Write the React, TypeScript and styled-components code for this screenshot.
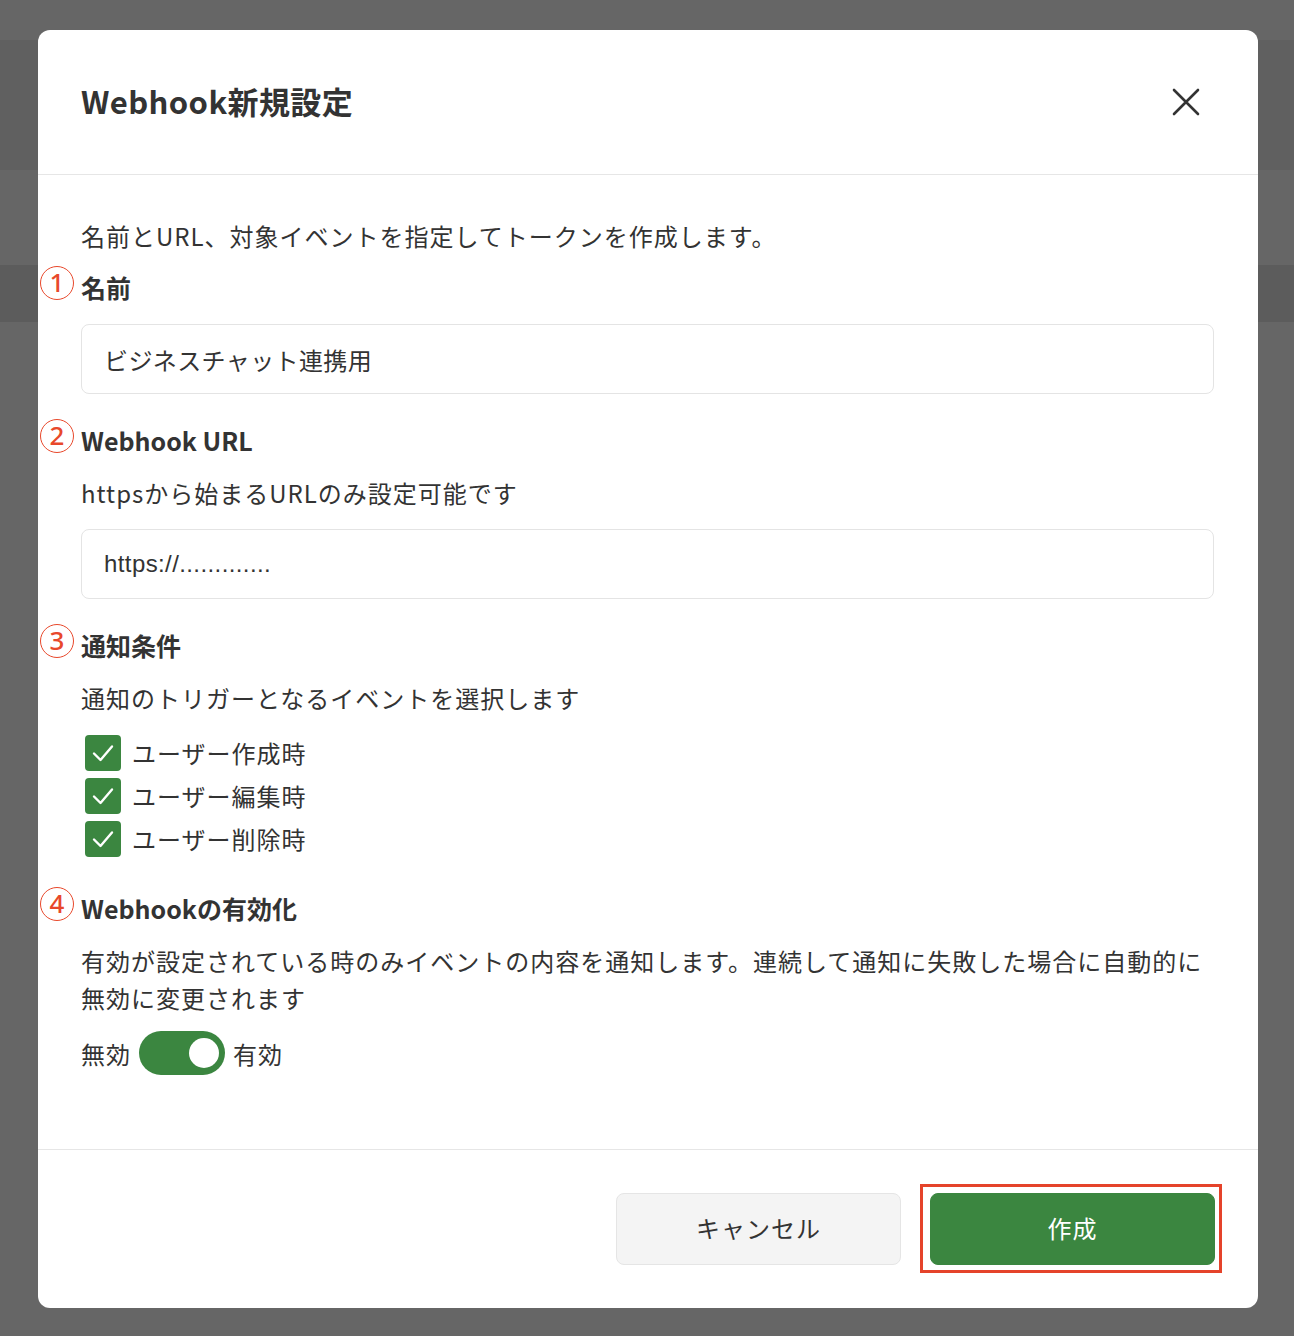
import React from "react";
import styled, { createGlobalStyle } from "styled-components";

const GlobalStyle = createGlobalStyle`
  html, body {
    margin: 0;
    padding: 0;
  }
  body {
    font-family: "Noto Sans CJK JP", "Noto Sans", sans-serif;
    color: #333;
  }
  * {
    box-sizing: border-box;
  }
`;

const Page = styled.div`
  position: relative;
  width: 100%;
  height: 1336px;
  overflow: hidden;
  background: #fff;
  display: flex;
  flex-direction: column;
`;

const Band = styled.div<{ $h: number; $bg: string }>`
  height: ${(p) => p.$h}px;
  background: ${(p) => p.$bg};
  flex-shrink: 0;
`;

const Overlay = styled.div`
  position: absolute;
  inset: 0;
  background: rgba(0, 0, 0, 0.6);
  display: flex;
  padding: 30px 36px 28px 38px;
`;

const Modal = styled.div`
  flex: 1;
  background: #fff;
  border-radius: 12px;
  display: flex;
  flex-direction: column;
`;

const Header = styled.header`
  height: 145px;
  flex-shrink: 0;
  display: flex;
  align-items: center;
  justify-content: space-between;
  padding: 0 56px 0 43px;
  border-bottom: 1px solid #e6e6e6;
`;

const Title = styled.h1`
  margin: -4px 0 0;
  font-size: 31px;
  font-weight: 700;
  color: #333;
  letter-spacing: 0.4px;
`;

const CloseButton = styled.button`
  border: 0;
  background: none;
  padding: 0;
  width: 32px;
  height: 32px;
  display: flex;
  align-items: center;
  justify-content: center;
  cursor: pointer;
`;

const Body = styled.div`
  flex: 1;
  padding: 42px 44px 0 43px;
  display: flex;
  flex-direction: column;
  letter-spacing: 1px;
`;

const Lead = styled.p`
  margin: 0 0 13px;
  font-size: 24px;
  line-height: 38px;
`;

const Sections = styled.div`
  display: flex;
  flex-direction: column;
  gap: 29px;
`;

const Section = styled.section`
  display: flex;
  flex-direction: column;
  gap: 15px;
`;

const Label = styled.h2`
  position: relative;
  margin: 0;
  font-size: 25px;
  line-height: 38px;
  font-weight: 700;
  color: #333;
  letter-spacing: 0;
`;

const StepMark = styled.span`
  position: absolute;
  left: -41px;
  top: -2px;
  width: 34px;
  height: 34px;
  border: 1.6px solid #e8482b;
  border-radius: 50%;
  color: #e8482b;
  font-size: 26px;
  font-weight: 500;
  line-height: 30px;
  text-align: center;
  font-family: "Noto Sans", sans-serif;
`;

const Help = styled.p`
  margin: 0;
  font-size: 24px;
  line-height: 37px;
  color: #333;
`;

const TextInput = styled.input`
  height: 70px;
  width: 100%;
  margin: 3px 0 -2px;
  border: 1px solid #e4e4e4;
  border-radius: 8px;
  padding: 0 22px;
  font-family: "Liberation Sans", "Noto Sans CJK JP", sans-serif;
  font-size: 24px;
  letter-spacing: 0.4px;
  color: #333;
  outline: none;
  &::placeholder {
    color: #333;
  }
`;

const CheckList = styled.div`
  display: flex;
  flex-direction: column;
`;

const CheckRow = styled.label`
  height: 43px;
  display: flex;
  align-items: center;
  gap: 11px;
  padding-left: 4px;
  font-size: 24px;
  color: #333;
`;

const CheckBox = styled.span`
  width: 36px;
  height: 36px;
  border-radius: 4px;
  background: #3b8640;
  display: flex;
  align-items: center;
  justify-content: center;
`;

const ToggleRow = styled.div`
  display: flex;
  align-items: center;
  gap: 8px;
  font-size: 24px;
  color: #333;
`;

const Toggle = styled.span<{ $on: boolean }>`
  position: relative;
  width: 86px;
  height: 44px;
  border-radius: 22px;
  background: ${(p) => (p.$on ? "#3b8640" : "#ccc")};
  &::after {
    content: "";
    position: absolute;
    top: 7px;
    ${(p) => (p.$on ? "right: 6px;" : "left: 6px;")}
    width: 30px;
    height: 30px;
    border-radius: 50%;
    background: #fff;
  }
`;

const Footer = styled.footer`
  height: 159px;
  flex-shrink: 0;
  border-top: 1px solid #e6e6e6;
  display: flex;
  align-items: center;
  justify-content: flex-end;
  gap: 29px;
  padding: 0 43px 0 0;
`;

const Button = styled.button<{ $primary?: boolean }>`
  width: 285px;
  height: 72px;
  border-radius: 8px;
  border: 1px solid ${(p) => (p.$primary ? "#3b8640" : "#e5e5e5")};
  background: ${(p) => (p.$primary ? "#3b8640" : "#f4f4f4")};
  color: ${(p) => (p.$primary ? "#fff" : "#333")};
  font-family: "Noto Sans CJK JP", sans-serif;
  font-size: 24px;
  line-height: 1;
  padding: 0 0 2px;
  letter-spacing: 1px;
  cursor: pointer;
`;

const Highlight = styled.span`
  position: relative;
  display: flex;
  &::after {
    content: "";
    position: absolute;
    top: -9px;
    left: -10px;
    right: -7px;
    bottom: -8px;
    border: 3px solid #e5432a;
    pointer-events: none;
  }
`;

const Check = () => (
  <svg width="26" height="26" viewBox="0 0 26 26" fill="none">
    <path d="M4 13.5 L10.5 20 L22 6.5" stroke="#fff" strokeWidth="2.4" strokeLinecap="round" strokeLinejoin="round" />
  </svg>
);

const CloseIcon = () => (
  <svg width="28" height="28" viewBox="0 0 28 28" fill="none">
    <path d="M2 2 L26 26 M26 2 L2 26" stroke="#333" strokeWidth="2.6" strokeLinecap="round" />
  </svg>
);

const events = ["ユーザー作成時", "ユーザー編集時", "ユーザー削除時"];

export default function App() {
  return (
    <>
      <GlobalStyle />
      <Page>
        <Band $h={40} $bg="#fff" />
        <Band $h={130} $bg="#f0f0f0" />
        <Band $h={95} $bg="#fff" />
        <Band $h={57} $bg="#e6e6e6" />
        <Overlay>
          <Modal>
            <Header>
              <Title>Webhook新規設定</Title>
              <CloseButton aria-label="閉じる">
                <CloseIcon />
              </CloseButton>
            </Header>
            <Body>
              <Lead>名前とURL、対象イベントを指定してトークンを作成します。</Lead>
              <Sections>
                <Section>
                  <Label>
                    <StepMark>1</StepMark>名前
                  </Label>
                  <TextInput defaultValue="ビジネスチャット連携用" />
                </Section>
                <Section>
                  <Label>
                    <StepMark>2</StepMark>Webhook URL
                  </Label>
                  <Help>httpsから始まるURLのみ設定可能です</Help>
                  <TextInput placeholder="https://............." />
                </Section>
                <Section>
                  <Label>
                    <StepMark>3</StepMark>通知条件
                  </Label>
                  <Help>通知のトリガーとなるイベントを選択します</Help>
                  <CheckList>
                    {events.map((e) => (
                      <CheckRow key={e}>
                        <CheckBox>
                          <Check />
                        </CheckBox>
                        {e}
                      </CheckRow>
                    ))}
                  </CheckList>
                </Section>
                <Section>
                  <Label>
                    <StepMark>4</StepMark>Webhookの有効化
                  </Label>
                  <Help>
                    有効が設定されている時のみイベントの内容を通知します。連続して通知に失敗した場合に自動的に
                    <br />
                    無効に変更されます
                  </Help>
                  <ToggleRow>
                    無効
                    <Toggle $on />
                    有効
                  </ToggleRow>
                </Section>
              </Sections>
            </Body>
            <Footer>
              <Button>キャンセル</Button>
              <Highlight>
                <Button $primary>作成</Button>
              </Highlight>
            </Footer>
          </Modal>
        </Overlay>
      </Page>
    </>
  );
}
